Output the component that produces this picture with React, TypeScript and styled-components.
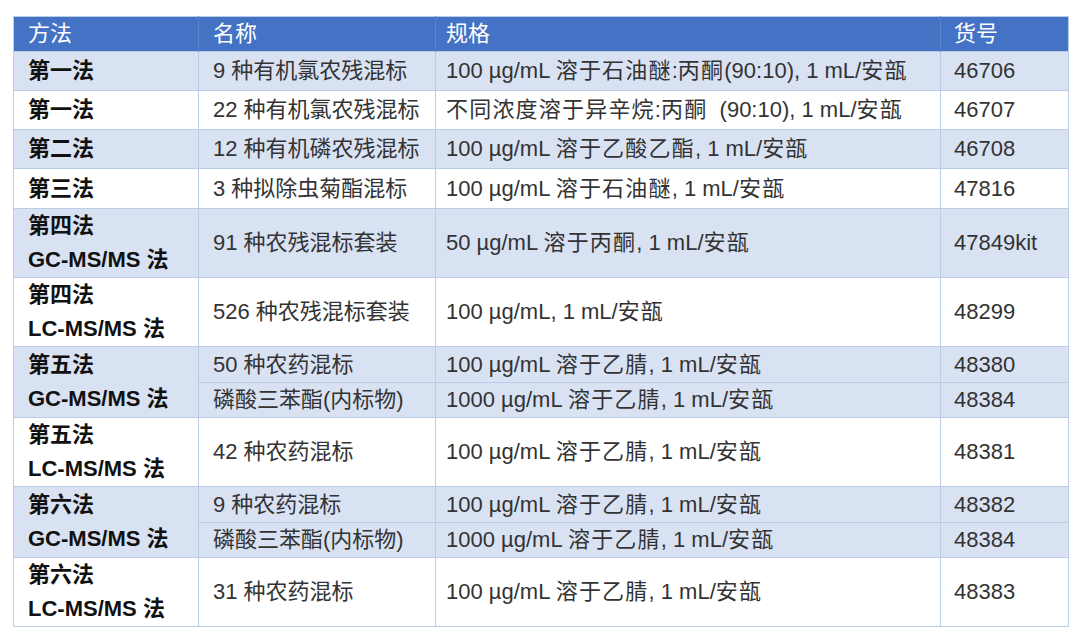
import styled, { createGlobalStyle } from 'styled-components';

const GlobalStyle = createGlobalStyle`
  html, body {
    margin: 0;
    padding: 0;
    background: #ffffff;
  }
  body {
    font-family: "Liberation Sans", "Noto Sans CJK SC", sans-serif;
  }
`;

type Row = {
  method?: string[];
  span?: number;
  name: string;
  spec: string;
  code: string;
  height: number;
  band: boolean;
};

const rows: Row[] = [
  { method: ['第一法'], name: '9 种有机氯农残混标', spec: '100 µg/mL 溶于石油醚:丙酮(90:10), 1 mL/安瓿', code: '46706', height: 39, band: true },
  { method: ['第一法'], name: '22 种有机氯农残混标', spec: '不同浓度溶于异辛烷:丙酮  (90:10), 1 mL/安瓿', code: '46707', height: 39, band: false },
  { method: ['第二法'], name: '12 种有机磷农残混标', spec: '100 µg/mL 溶于乙酸乙酯, 1 mL/安瓿', code: '46708', height: 39, band: true },
  { method: ['第三法'], name: '3 种拟除虫菊酯混标', spec: '100 µg/mL 溶于石油醚, 1 mL/安瓿', code: '47816', height: 40, band: false },
  { method: ['第四法', 'GC-MS/MS 法'], name: '91 种农残混标套装', spec: '50 µg/mL 溶于丙酮, 1 mL/安瓿', code: '47849kit', height: 69, band: true },
  { method: ['第四法', 'LC-MS/MS 法'], name: '526 种农残混标套装', spec: '100 µg/mL, 1 mL/安瓿', code: '48299', height: 67, band: false },
  { method: ['第五法', 'GC-MS/MS 法'], span: 2, name: '50 种农药混标', spec: '100 µg/mL 溶于乙腈, 1 mL/安瓿', code: '48380', height: 36, band: true },
  { name: '磷酸三苯酯(内标物)', spec: '1000 µg/mL 溶于乙腈, 1 mL/安瓿', code: '48384', height: 34, band: true },
  { method: ['第五法', 'LC-MS/MS 法'], name: '42 种农药混标', spec: '100 µg/mL 溶于乙腈, 1 mL/安瓿', code: '48381', height: 68, band: false },
  { method: ['第六法', 'GC-MS/MS 法'], span: 2, name: '9 种农药混标', spec: '100 µg/mL 溶于乙腈, 1 mL/安瓿', code: '48382', height: 36, band: true },
  { name: '磷酸三苯酯(内标物)', spec: '1000 µg/mL 溶于乙腈, 1 mL/安瓿', code: '48384', height: 33, band: true },
  { method: ['第六法', 'LC-MS/MS 法'], name: '31 种农药混标', spec: '100 µg/mL 溶于乙腈, 1 mL/安瓿', code: '48383', height: 66, band: false },
];

const Page = styled.div`
  padding: 16px 12px 0 13px;
`;

const Table = styled.table`
  width: 1055px;
  border-collapse: collapse;
  table-layout: fixed;
  font-size: 22px;
  border: 1px solid #bccbe6;
`;

const HeadRow = styled.tr`
  height: 35px;
  background: #4472c4;
`;

const HeadCell = styled.th<{ $pad: number }>`
  padding: 0 0 0 ${(p) => p.$pad}px;
  text-align: left;
  font-weight: 400;
  color: #ffffff;
  line-height: 34px;
  border-left: 1px solid #5f86cc;
  &:first-child {
    border-left: none;
  }
`;

const BodyRow = styled.tr<{ $h: number; $band: boolean }>`
  height: ${(p) => p.$h}px;
  background: ${(p) => (p.$band ? '#d9e2f3' : '#ffffff')};
`;

const Cell = styled.td<{ $pad: number }>`
  padding: 0 4px 0 ${(p) => p.$pad}px;
  border: 1px solid #bccbe6;
  color: #333333;
  line-height: 34px;
  white-space: pre;
  vertical-align: middle;
  overflow: hidden;
`;

const MethodCell = styled(Cell)`
  color: #111111;
  font-weight: 700;
`;

const Line = styled.div`
  line-height: 34px;
`;

// the spec column's Chinese glyphs sit a little wider apart than the Latin text
const Han = styled.span`
  letter-spacing: 1.2px;
`;

const splitHan = (text: string) =>
  text.split(/([\u3400-\u9fff]+)/).map((part, i) =>
    i % 2 === 1 ? <Han key={i}>{part}</Han> : part
  );

const cols = [185, 237, 505, 128];
const pads = [14, 14, 10, 13];

export default function App() {
  return (
    <Page>
      <GlobalStyle />
      <Table>
        <colgroup>
          {cols.map((w, i) => (
            <col key={i} style={{ width: w }} />
          ))}
        </colgroup>
        <thead>
          <HeadRow>
            {['方法', '名称', '规格', '货号'].map((h, i) => (
              <HeadCell key={h} $pad={pads[i]}>
                {h}
              </HeadCell>
            ))}
          </HeadRow>
        </thead>
        <tbody>
          {rows.map((r, i) => (
            <BodyRow key={i} $h={r.height} $band={r.band}>
              {r.method && (
                <MethodCell $pad={pads[0]} rowSpan={r.span ?? 1}>
                  {r.method.map((m) => (
                    <Line key={m}>{m}</Line>
                  ))}
                </MethodCell>
              )}
              <Cell $pad={pads[1]}>{r.name}</Cell>
              <Cell $pad={pads[2]}>{splitHan(r.spec)}</Cell>
              <Cell $pad={pads[3]}>{r.code}</Cell>
            </BodyRow>
          ))}
        </tbody>
      </Table>
    </Page>
  );
}
